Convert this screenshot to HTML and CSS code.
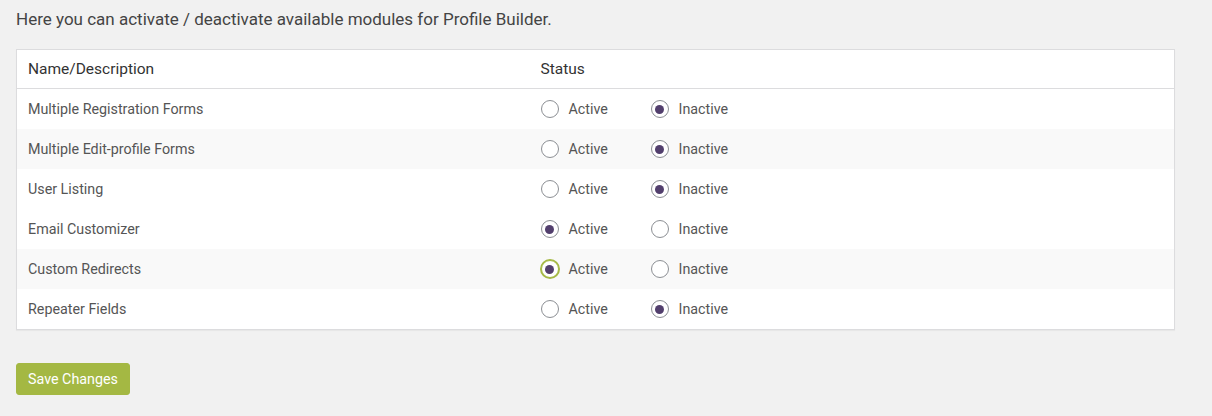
FILE: index.html
```html
<!DOCTYPE html>
<html lang="en">
<head>
  <meta charset="UTF-8" />
  <title>Profile Builder Modules</title>
  <link rel="stylesheet" href="styles.css">
</head>
<body>
  <div class="wrap">
    <p class="intro">Here you can activate / deactivate available modules for Profile Builder.</p>

    <table class="modules">
      <colgroup>
        <col class="col-name">
        <col>
      </colgroup>
      <thead>
        <tr>
          <th>Name/Description</th>
          <th>Status</th>
        </tr>
      </thead>
      <tbody>
        <tr>
          <td>Multiple Registration Forms</td>
          <td>
            <div class="status">
              <label class="opt"><input type="radio" name="m1"> Active</label>
              <label class="opt"><input type="radio" name="m1" checked> Inactive</label>
            </div>
          </td>
        </tr>
        <tr class="alt">
          <td>Multiple Edit-profile Forms</td>
          <td>
            <div class="status">
              <label class="opt"><input type="radio" name="m2"> Active</label>
              <label class="opt"><input type="radio" name="m2" checked> Inactive</label>
            </div>
          </td>
        </tr>
        <tr>
          <td>User Listing</td>
          <td>
            <div class="status">
              <label class="opt"><input type="radio" name="m3"> Active</label>
              <label class="opt"><input type="radio" name="m3" checked> Inactive</label>
            </div>
          </td>
        </tr>
        <tr>
          <td>Email Customizer</td>
          <td>
            <div class="status">
              <label class="opt"><input type="radio" name="m4" checked> Active</label>
              <label class="opt"><input type="radio" name="m4"> Inactive</label>
            </div>
          </td>
        </tr>
        <tr class="alt">
          <td>Custom Redirects</td>
          <td>
            <div class="status">
              <label class="opt"><input type="radio" name="m5" class="focused" checked> Active</label>
              <label class="opt"><input type="radio" name="m5"> Inactive</label>
            </div>
          </td>
        </tr>
        <tr>
          <td>Repeater Fields</td>
          <td>
            <div class="status">
              <label class="opt"><input type="radio" name="m6"> Active</label>
              <label class="opt"><input type="radio" name="m6" checked> Inactive</label>
            </div>
          </td>
        </tr>
      </tbody>
    </table>

    <button class="save">Save Changes</button>
  </div>
</body>
</html>
```

FILE: styles.css
```css
body {
  margin: 0;
  background: #f1f1f1;
  font-family: Roboto, "Liberation Sans", sans-serif;
  color: #3c434a;
}
.wrap {
  padding: 7px 37px 0 16px;
}
.intro {
  margin: 0 0 18px;
  font-size: 17px;
  line-height: 24px;
  color: #444;
}
.modules {
  width: 100%;
  border-collapse: collapse;
  table-layout: fixed;
  background: #fff;
  border: 1px solid #dcdcde;
  box-shadow: 0 1px 1px rgba(0,0,0,0.04);
  font-size: 14.3px;
}
.col-name {
  width: 513px;
}
.modules th {
  text-align: left;
  font-weight: 400;
  font-size: 15.5px;
  color: #333;
  height: 38px;
  padding: 0 11px;
  border-bottom: 1px solid #dcdcde;
}
.modules td {
  height: 40px;
  padding: 0 11px;
  color: #555;
}
.modules tr.alt td {
  background: #f9f9f9;
}
.status {
  display: flex;
  align-items: center;
}
.opt {
  display: flex;
  align-items: center;
  width: 110px;
  cursor: pointer;
}
.opt input {
  appearance: none;
  -webkit-appearance: none;
  flex: none;
  width: 18px;
  height: 18px;
  margin: 0 10px 0 0;
  border: 1px solid #8c8f94;
  border-radius: 50%;
  background: #fff;
  display: grid;
  place-items: center;
  box-sizing: border-box;
}
.opt input:checked::before {
  content: "";
  width: 9px;
  height: 9px;
  border-radius: 50%;
  background: #523f6d;
}
.opt input.focused {
  border-color: #a4b843;
  box-shadow: 0 0 0 1px #a4b843;
}
.save {
  margin-top: 33px;
  height: 32px;
  padding: 0 11px;
  background: #a4b843;
  color: #fff;
  border: 1px solid #a4b843;
  border-radius: 3px;
  font-family: Roboto, "Liberation Sans", sans-serif;
  font-size: 14.3px;
  cursor: pointer;
}
```
